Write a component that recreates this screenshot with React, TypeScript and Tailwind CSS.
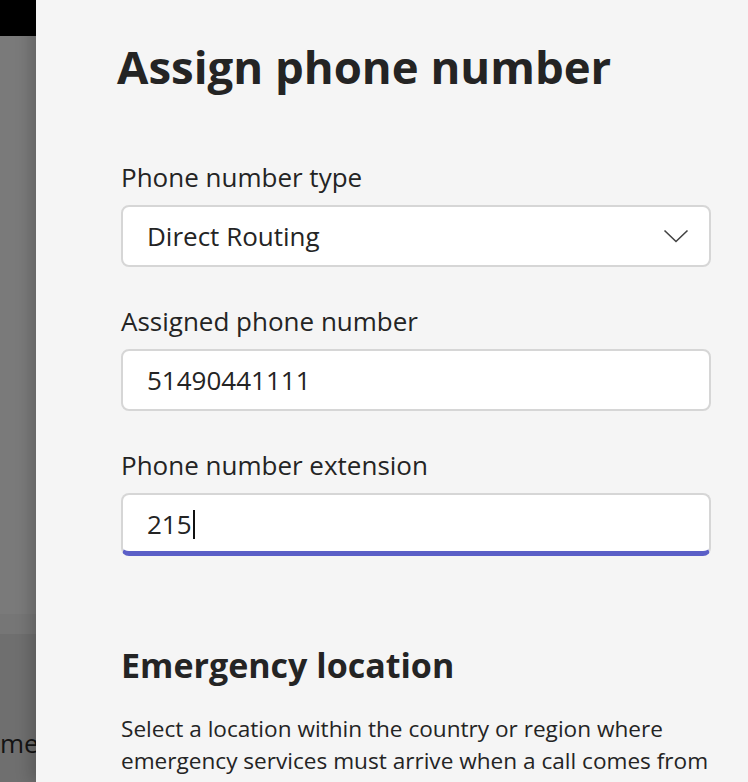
const FIELDS = [
  { label: "Phone number type", value: "Direct Routing", kind: "select" },
  { label: "Assigned phone number", value: "51490441111", kind: "text" },
  { label: "Phone number extension", value: "215", kind: "focused" },
];

function Field({ label, value, kind }: { label: string; value: string; kind: string }) {
  const focused = kind === "focused";
  return (
    <div className="flex flex-col">
      <label className="text-[26px] leading-[34px] text-[#242424]">{label}</label>
      <div
        className={
          focused
            ? "mt-[11px] flex h-[63px] items-center rounded-[8px] border-2 border-[#d6d6d6] border-b-[5px] border-b-[#5b5fc7] bg-white pl-[24px] pr-[20px] pt-[2px]"
            : "mt-[11px] flex h-[62px] items-center rounded-[8px] border-2 border-[#d6d6d6] bg-white pl-[24px] pr-[20px]"
        }
      >
        <span className="text-[26px] leading-[34px] text-[#242424]">{value}</span>
        {focused && <span className="ml-[1px] h-[29px] w-[2px] bg-[#111]" />}
        {kind === "select" && (
          <svg className="ml-auto" width="26" height="14" viewBox="0 0 26 14" fill="none">
            <polyline points="1.5,1.5 13,12.5 24.5,1.5" stroke="#424242" strokeWidth="1.6" />
          </svg>
        )}
      </div>
    </div>
  );
}

export default function App() {
  return (
    <div className="flex h-[782px] w-[748px] overflow-hidden font-['Open_Sans',sans-serif]">
      {/* dimmed page behind the panel */}
      <div className="flex w-[36px] shrink-0 flex-col">
        <div className="h-[36px] bg-black" />
        <div className="h-[578px] bg-[#7a7a7a]" />
        <div className="h-[20px] bg-[#767676]" />
        <div className="flex flex-1 flex-col overflow-hidden bg-[#6f6f6f] pt-[92px]">
          <span className="whitespace-nowrap text-[26px] leading-[34px] text-[#141414]">mediate</span>
        </div>
      </div>

      <div className="relative flex-1 bg-[#f5f5f5] pl-[85px] pt-[38px] shadow-[-6px_0_14px_rgba(0,0,0,0.18)]">
        <h1 className="-ml-[4px] text-[45.5px] font-bold leading-[56px] text-[#242424]">Assign phone number</h1>

        <div className="mt-[66px] flex w-[590px] flex-col gap-[37px]">
          {FIELDS.map((f) => (
            <Field key={f.label} {...f} />
          ))}
        </div>

        <h2 className="mt-[87px] text-[34px] font-bold leading-[44px] text-[#242424]">Emergency location</h2>
        <p className="mt-[26px] w-[600px] text-[22.6px] leading-[32px] text-[#242424]">
          Select a location within the country or region where emergency services must arrive when a call comes from
          this user.
        </p>
      </div>
    </div>
  );
}
